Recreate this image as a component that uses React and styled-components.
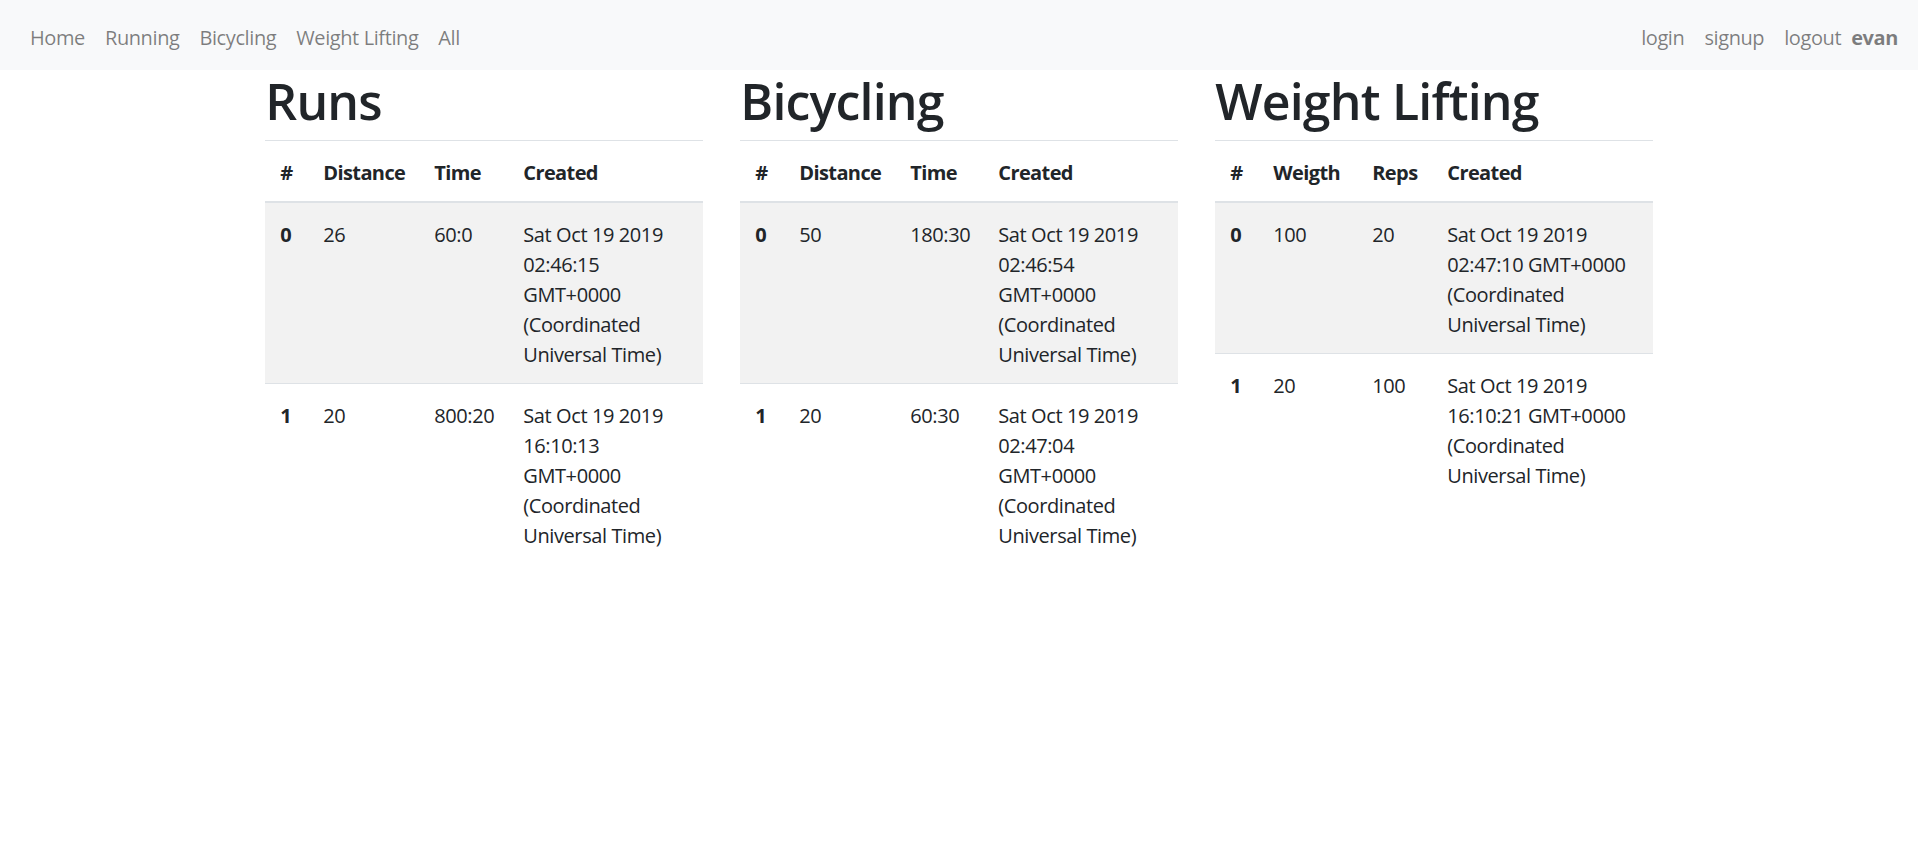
import React from 'react'
import styled, { createGlobalStyle } from 'styled-components'

const GlobalStyle = createGlobalStyle`
  * { box-sizing: border-box; }
  body {
    margin: 0;
    font-family: "Open Sans", "Noto Sans", sans-serif;
    font-size: 20px;
    line-height: 1.5;
    letter-spacing: -0.4px;
    color: #212529;
    background: #ffffff;
  }
`

const NavBar = styled.nav`
  height: 70px;
  background: #f8f9fa;
  display: flex;
  align-items: center;
  justify-content: space-between;
  padding: 13px 20px 7px;
`

const NavGroup = styled.div`
  display: flex;
  align-items: center;
`

const NavLink = styled.a`
  padding: 10px;
  color: rgba(0, 0, 0, 0.5);
  text-decoration: none;
  cursor: pointer;
`

const UserName = styled.span`
  color: rgba(0, 0, 0, 0.5);
  font-weight: 700;
`

const Container = styled.div`
  width: 1425px;
  margin: 0 auto;
  padding: 0 18.75px;
`

const Row = styled.div`
  display: grid;
  grid-template-columns: repeat(3, 1fr);
  column-gap: 37.5px;
`

const Title = styled.h1`
  margin: 0 0 10px;
  padding-top: 3px;
  font-size: 50px;
  font-weight: 600;
  line-height: 57px;
  letter-spacing: -0.8px;
`

const Table = styled.table`
  width: 100%;
  border-collapse: collapse;
  table-layout: fixed;
  margin-bottom: 20px;
`

const Th = styled.th`
  width: ${p => (p.$w ? `${p.$w}px` : 'auto')};
  padding: 17px 15px 13px;
  text-align: left;
  vertical-align: bottom;
  font-weight: 700;
  letter-spacing: -0.6px;
  border-top: 1px solid #dee2e6;
  border-bottom: 2px solid #dee2e6;
`

const Tr = styled.tr`
  &:nth-of-type(odd) {
    background: rgba(0, 0, 0, 0.05);
  }
`

const RowHead = styled.th`
  padding: 17px 15px 13px;
  text-align: left;
  vertical-align: top;
  font-weight: 700;
  border-top: 1px solid #dee2e6;
`

const Td = styled.td`
  padding: 17px 15px 13px;
  vertical-align: top;
  border-top: 1px solid #dee2e6;
`

const sections = [
  {
    title: 'Runs',
    cols: [['#', 43], ['Distance', 111], ['Time', 89], ['Created']],
    rows: [
      ['26', '60:0', 'Sat Oct 19 2019 02:46:15 GMT+0000 (Coordinated Universal Time)'],
      ['20', '800:20', 'Sat Oct 19 2019 16:10:13 GMT+0000 (Coordinated Universal Time)'],
    ],
  },
  {
    title: 'Bicycling',
    cols: [['#', 44], ['Distance', 111], ['Time', 88], ['Created']],
    rows: [
      ['50', '180:30', 'Sat Oct 19 2019 02:46:54 GMT+0000 (Coordinated Universal Time)'],
      ['20', '60:30', 'Sat Oct 19 2019 02:47:04 GMT+0000 (Coordinated Universal Time)'],
    ],
  },
  {
    title: 'Weight Lifting',
    cols: [['#', 43], ['Weigth', 99], ['Reps', 75], ['Created']],
    rows: [
      ['100', '20', 'Sat Oct 19 2019 02:47:10 GMT+0000 (Coordinated Universal Time)'],
      ['20', '100', 'Sat Oct 19 2019 16:10:21 GMT+0000 (Coordinated Universal Time)'],
    ],
  },
]

const App = () => {
  return (
    <>
      <GlobalStyle />
      <NavBar>
        <NavGroup>
          <NavLink>Home</NavLink>
          <NavLink>Running</NavLink>
          <NavLink>Bicycling</NavLink>
          <NavLink>Weight Lifting</NavLink>
          <NavLink>All</NavLink>
        </NavGroup>
        <NavGroup>
          <NavLink>login</NavLink>
          <NavLink>signup</NavLink>
          <NavLink>logout</NavLink>
          <UserName>evan</UserName>
        </NavGroup>
      </NavBar>
      <Container>
        <Row>
          {sections.map(s => (
            <div key={s.title}>
              <Title>{s.title}</Title>
              <Table>
                <thead>
                  <tr>
                    {s.cols.map(([name, w]) => (
                      <Th key={name} $w={w}>{name}</Th>
                    ))}
                  </tr>
                </thead>
                <tbody>
                  {s.rows.map((r, i) => (
                    <Tr key={i}>
                      <RowHead>{i}</RowHead>
                      {r.map((v, j) => (
                        <Td key={j}>{v}</Td>
                      ))}
                    </Tr>
                  ))}
                </tbody>
              </Table>
            </div>
          ))}
        </Row>
      </Container>
    </>
  )
}

export default App
